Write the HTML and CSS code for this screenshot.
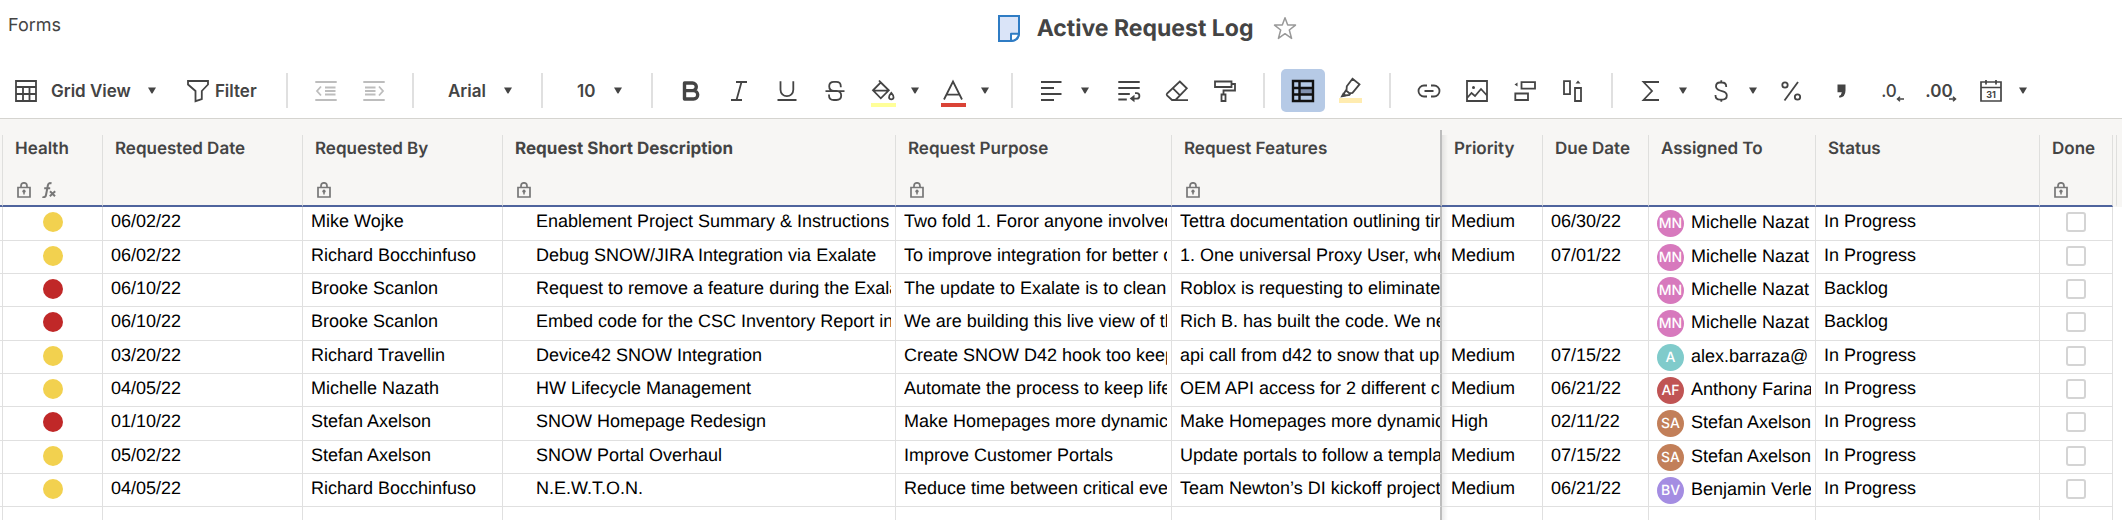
FILE: index.html
```html
<!DOCTYPE html>
<html lang="en">
<head>
<meta charset="utf-8">
<meta name="viewport" content="width=device-width, initial-scale=1">
<title>Active Request Log</title>
<link rel="stylesheet" href="styles.css">
</head>
<body>
<svg class="sprite" aria-hidden="true">
  <symbol id="caret" viewBox="0 0 8 7"><path d="M0 0.5h8L4.6 6.2q-.6.8-1.2 0z" fill="currentColor"/></symbol>
  <symbol id="lock" viewBox="0 0 14 16"><path d="M1 5.5h12v9.5H1zM4 5.500V4a3 3.200 0 0 1 6 0v1.500" fill="none" stroke="currentColor" stroke-width="1.700"/><circle cx="7" cy="9.200" r="1.600" fill="currentColor"/><path d="M7 9v3.500" stroke="currentColor" stroke-width="1.500"/></symbol>
  <symbol id="fx" viewBox="0 0 14 16"><path d="M9.500 1.500C7.600.5 6.300 1.300 5.900 3.300L4 13c-.4 2-1.600 2.600-3.500 1.800M2.200 6.300h6M8 9.300l5 5M13.200 9.300L7.800 14.300" fill="none" stroke="currentColor" stroke-width="2"/></symbol>
</svg>

<header class="topbar">
  <a class="forms-link" href="#forms">Forms</a>
  <div class="sheet-title">
    <svg class="sheet-icon" viewBox="0 0 22 27" aria-hidden="true"><path d="M1 1h20v17.500q-1 7.500-8 7.500H1z" fill="#dae4f8" stroke="#2f7cc4" stroke-width="2"/><path d="M13 26v-7.200h8q-1 6.500-8 7.200z" fill="#fff" stroke="#2f7cc4" stroke-width="2" stroke-linejoin="round"/></svg>
    <h1>Active Request Log</h1>
    <button class="star" type="button" aria-label="Favorite"><svg viewBox="0 0 24 24"><path d="M12 1.800l2.700 7.300h7.800l-6.200 4.900 2.300 8.400L12 17.700l-6.600 4.700L7.700 14 1.500 9.100h7.800z" fill="none" stroke="#999" stroke-width="1.500" stroke-linejoin="round"/></svg></button>
  </div>
</header>

<nav class="toolbar" aria-label="Sheet tools">
  <div class="group group-view">
    <button class="tool-text view" type="button" aria-haspopup="true">
      <svg class="ico" viewBox="0 0 24 24"><path d="M2 2h20v20H2zM2 8h20M2 15h20M9 8v14M15.500 8v14"/></svg>
      <span>Grid View</span>
      <svg class="caret"><use href="#caret"/></svg>
    </button>
    <button class="tool-text filter" type="button">
      <svg class="ico" viewBox="0 0 24 24"><path d="M2 2h20v3.500l-6.200 6.500v8l-6.300 2.200V12L2 5.500z"/></svg>
      <span>Filter</span>
    </button>
  </div>
  <span class="sep"></span>
  <div class="group">
    <button class="tool muted" type="button" aria-label="Outdent"><svg class="ico" viewBox="0 0 24 24"><path d="M1.300 3h21.400M1.300 21h21.400M11 8.500h10.500M11 12h10.500M11 15.500h10.500M7 7.500L3 12l4 4.500"/></svg></button>
    <button class="tool muted" type="button" aria-label="Indent"><svg class="ico" viewBox="0 0 24 24"><path d="M1.300 3h21.400M1.300 21h21.400M3 8.500h10.500M3 12h10.500M3 15.500h10.500M17 7.500l4 4.500-4 4.500"/></svg></button>
  </div>
  <span class="sep"></span>
  <label class="picker picker-font"><select aria-label="Font"><option>Arial</option></select><svg class="caret"><use href="#caret"/></svg></label>
  <span class="sep"></span>
  <label class="picker picker-size"><select aria-label="Font size"><option>10</option></select><svg class="caret"><use href="#caret"/></svg></label>
  <span class="sep"></span>
  <div class="group">
    <button class="tool" type="button" aria-label="Bold"><svg class="ico" viewBox="0 0 24 24"><path d="M5.500 4v16h9a4.200 4.200 0 0 0 0-8.400H6h7.500a3.800 3.800 0 0 0 0-7.600z" stroke-width="3.400" stroke-linejoin="round"/></svg></button>
    <button class="tool" type="button" aria-label="Italic"><svg class="ico" viewBox="0 0 24 24"><path d="M9 3h11M4 21h11M14.500 3L9.500 21"/></svg></button>
    <button class="tool" type="button" aria-label="Underline"><svg class="ico" viewBox="0 0 24 24"><path d="M5.500 2.300v8.500a6.400 6.400 0 0 0 12.800 0V2.300M2.500 21h19"/></svg></button>
    <button class="tool" type="button" aria-label="Strikethrough"><svg class="ico" viewBox="0 0 24 24"><path d="M17.800 8.200V7.400q0-4.600-4.600-4.600h-2.400Q6.200 2.800 6.200 7.300q0 4.500 4.800 4.500h2.200q5 0 5 4.700 0 4.500-4.800 4.500h-2.600q-4.800 0-4.800-4.800v-.6M2.500 12.200h19"/></svg></button>
    <div class="split">
      <button class="tool tool-color" type="button" aria-label="Fill color"><svg class="ico" viewBox="0 0 24 24"><path d="M9.800 3.500l8 7.800-8 8L2 11.300l7.800-7.800L8 1.500M2.500 11.600h15"/><path d="M20.300 13.800c-3.500 3.800-2.500 6.500 0 6.500s3.500-2.700 0-6.500z"/></svg><span class="swatch swatch-fill"></span></button>
      <button class="more" type="button" aria-label="Choose fill color"><svg class="caret"><use href="#caret"/></svg></button>
    </div>
    <div class="split">
      <button class="tool tool-color" type="button" aria-label="Text color"><svg class="ico" viewBox="0 0 24 24"><path d="M3 20.500L12 2.500l9 18M5.500 15.700h13"/></svg><span class="swatch swatch-text"></span></button>
      <button class="more" type="button" aria-label="Choose text color"><svg class="caret"><use href="#caret"/></svg></button>
    </div>
  </div>
  <span class="sep"></span>
  <div class="group">
    <div class="split split-wide">
      <button class="tool" type="button" aria-label="Align left"><svg class="ico" viewBox="0 0 24 24"><path d="M2 3h20.500M2 9h13M2 15h20.500M2 21h13"/></svg></button>
      <button class="more" type="button" aria-label="Choose alignment"><svg class="caret"><use href="#caret"/></svg></button>
    </div>
    <button class="tool" type="button" aria-label="Wrap text"><svg class="ico" viewBox="0 0 24 24"><path d="M1.300 3h21.400M1.300 9h21.400M1.300 15h11.500M1.300 20.500h8.500M18 14.200h1.700a2.700 2.700 0 0 1 0 5.400h-5"/><path class="solid" d="M17.500 15.800v7.400l-4.800-3.700z"/></svg></button>
    <button class="tool" type="button" aria-label="Clear format"><svg class="ico" viewBox="0 0 24 24"><path d="M14.800 2.500l7 6.800L10.500 21H7L2 16.300q-.6-.8 0-1.600zM8 9.300l7 7M9 21.200h14"/></svg></button>
    <button class="tool" type="button" aria-label="Format painter"><svg class="ico" viewBox="0 0 24 24"><path d="M2 2.500h16.500v5.500H2zM18.500 5h3.500v6.500H10.500v4M8.500 15.500h4v6.500h-4z"/></svg></button>
  </div>
  <span class="sep"></span>
  <div class="group">
    <button class="tool active" type="button" aria-pressed="true" aria-label="Highlight rows"><svg class="ico" viewBox="0 0 24 24"><path class="band" d="M8.500 9h13.500v6H8.500z"/><path d="M2 2h20v20H2zM2 9h20M2 15.500h20M8.500 2v20" stroke-width="2.400"/></svg></button>
    <button class="tool tool-mark" type="button" aria-label="Highlight changes"><svg class="ico" viewBox="0 0 24 24"><path d="M13.500 2.800l7 5.500-7 8.500-3.200.4-2.800-2.400.3-4.500zM7.500 13.500l-2.700 4.200 1.600 1.800 4-.5 1.300-2M4.800 17L3 20.300l4-.8"/></svg><span class="swatch swatch-mark"></span></button>
  </div>
  <span class="sep"></span>
  <div class="group">
    <button class="tool" type="button" aria-label="Insert link"><svg class="ico" viewBox="0 0 24 24"><path d="M10 6.500H7a5.500 5.500 0 0 0 0 11h3M14 6.500h3a5.500 5.500 0 0 1 0 11h-3M7.500 12h9"/></svg></button>
    <button class="tool" type="button" aria-label="Insert image"><svg class="ico" viewBox="0 0 24 24"><path d="M2 2h20v20H2zM2.500 18.500l4-4.500 3.500 3 6-7 6 6.500"/><circle class="solid" cx="8.500" cy="8.500" r="1.500"/></svg></button>
    <button class="tool" type="button" aria-label="Insert row"><svg class="ico" viewBox="0 0 24 24"><path d="M8.500 3.200H22v6.500H8.500zM2.300 14.500h12.700v6.500H2.300z"/><path class="solid" d="M1.500 5.500l3-2v4z"/></svg></button>
    <button class="tool" type="button" aria-label="Insert column"><svg class="ico" viewBox="0 0 24 24"><path d="M3 2.200h6v13H3zM14 9h6v13h-6z"/><path class="solid" d="M17 1.500l2.500 3h-5z"/></svg></button>
  </div>
  <span class="sep"></span>
  <div class="group group-format">
    <div class="split">
      <button class="tool" type="button" aria-label="Functions"><svg class="ico" viewBox="0 0 24 24"><path d="M20 3H4.500l8.500 9-8.500 9H20"/></svg></button>
      <button class="more" type="button" aria-label="Choose function"><svg class="caret"><use href="#caret"/></svg></button>
    </div>
    <div class="split">
      <button class="tool" type="button" aria-label="Currency"><svg class="ico" viewBox="0 0 24 24"><path d="M17.200 8V7.500q0-4-4.200-4h-2q-4 0-4 3.800 0 3 4 4.200l2.800.9q4 1.200 4 4.200 0 4-4.300 4h-2.700q-4.300 0-4.300-4v-.5M12.300 1.300v2.200M12.300 20.600v2.200"/></svg></button>
      <button class="more" type="button" aria-label="Choose currency"><svg class="caret"><use href="#caret"/></svg></button>
    </div>
    <button class="tool" type="button" aria-label="Percent"><svg class="ico" viewBox="0 0 24 24"><circle cx="6" cy="6" r="2.700"/><circle cx="18.500" cy="18" r="2.700"/><path d="M19 3L5.500 21.500"/></svg></button>
    <button class="tool" type="button" aria-label="Thousands separator"><svg class="ico" viewBox="0 0 24 24"><path class="solid" d="M8.500 5.500h8v6q0 6.500-6 7.300l-.5-1.800q2.500-.8 2.800-3.800H8.500z"/></svg></button>
    <button class="tool decimal decimal-less" type="button"><span>.0</span><svg viewBox="0 0 8 6"><path d="M8 3H1.500M4 .7L1.500 3 4 5.300"/></svg></button>
    <button class="tool decimal decimal-add" type="button"><span>.00</span><svg viewBox="0 0 8 6"><path d="M0 3h6.500M4 .7L6.500 3 4 5.300"/></svg></button>
    <div class="split">
      <button class="tool date" type="button" aria-label="Date format"><svg class="ico" viewBox="0 0 24 24"><path d="M2 3h20v19H2zM2 8.500h20M7 1v4.500M17 1v4.500" stroke-width="1.700"/></svg><span>31</span></button>
      <button class="more" type="button" aria-label="Choose date format"><svg class="caret"><use href="#caret"/></svg></button>
    </div>
  </div>
</nav>

<main class="sheet">
<table class="grid">
  <colgroup>
    <col class="w-gutter"><col class="w-health"><col class="w-date"><col class="w-by"><col class="w-desc"><col class="w-purpose"><col class="w-features"><col class="w-priority"><col class="w-due"><col class="w-assigned"><col class="w-status"><col class="w-done"><col class="w-edge"><col>
  </colgroup>
  <thead>
    <tr>
      <td></td>
      <th scope="col"><div class="head"><span>Health</span><span class="marks"><svg class="mark"><use href="#lock"/></svg><svg class="mark"><use href="#fx"/></svg></span></div></th>
      <th scope="col"><div class="head"><span>Requested Date</span></div></th>
      <th scope="col"><div class="head"><span>Requested By</span><span class="marks"><svg class="mark"><use href="#lock"/></svg></span></div></th>
      <th scope="col" class="primary"><div class="head"><span>Request Short Description</span><span class="marks"><svg class="mark"><use href="#lock"/></svg></span></div></th>
      <th scope="col"><div class="head"><span>Request Purpose</span><span class="marks"><svg class="mark"><use href="#lock"/></svg></span></div></th>
      <th scope="col" class="frozen-end"><div class="head"><span>Request Features</span><span class="marks"><svg class="mark"><use href="#lock"/></svg></span></div></th>
      <th scope="col" class="after-freeze"><div class="head"><span>Priority</span></div></th>
      <th scope="col"><div class="head"><span>Due Date</span></div></th>
      <th scope="col"><div class="head"><span>Assigned To</span></div></th>
      <th scope="col"><div class="head"><span>Status</span></div></th>
      <th scope="col"><div class="head"><span>Done</span><span class="marks"><svg class="mark"><use href="#lock"/></svg></span></div></th>
      <td class="edge"></td><td class="rest"></td>
    </tr>
  </thead>
  <tbody>
    <tr><td></td><td><span class="dot yellow"></span></td><td>06/02/22</td><td>Mike Wojke</td><td class="primary"><div>Enablement Project Summary &amp; Instructions</div></td><td><div>Two fold 1. Foror anyone involved</div></td><td class="frozen-end"><div>Tettra documentation outlining tim</div></td><td class="after-freeze">Medium</td><td>06/30/22</td><td><div class="person"><span class="avatar pink">MN</span>Michelle Nazat</div></td><td>In Progress</td><td><input type="checkbox" aria-label="Done"></td><td class="rest"></td><td class="rest"></td></tr>
    <tr><td></td><td><span class="dot yellow"></span></td><td>06/02/22</td><td>Richard Bocchinfuso</td><td class="primary"><div>Debug SNOW/JIRA Integration via Exalate</div></td><td><div>To improve integration for better c</div></td><td class="frozen-end"><div>1. One universal Proxy User, whe</div></td><td class="after-freeze">Medium</td><td>07/01/22</td><td><div class="person"><span class="avatar pink">MN</span>Michelle Nazat</div></td><td>In Progress</td><td><input type="checkbox" aria-label="Done"></td><td class="rest"></td><td class="rest"></td></tr>
    <tr><td></td><td><span class="dot red"></span></td><td>06/10/22</td><td>Brooke Scanlon</td><td class="primary"><div>Request to remove a feature during the Exala</div></td><td><div>The update to Exalate is to clean</div></td><td class="frozen-end"><div>Roblox is requesting to eliminate</div></td><td class="after-freeze"></td><td></td><td><div class="person"><span class="avatar pink">MN</span>Michelle Nazat</div></td><td>Backlog</td><td><input type="checkbox" aria-label="Done"></td><td class="rest"></td><td class="rest"></td></tr>
    <tr><td></td><td><span class="dot red"></span></td><td>06/10/22</td><td>Brooke Scanlon</td><td class="primary"><div>Embed code for the CSC Inventory Report in</div></td><td><div>We are building this live view of th</div></td><td class="frozen-end"><div>Rich B. has built the code. We ne</div></td><td class="after-freeze"></td><td></td><td><div class="person"><span class="avatar pink">MN</span>Michelle Nazat</div></td><td>Backlog</td><td><input type="checkbox" aria-label="Done"></td><td class="rest"></td><td class="rest"></td></tr>
    <tr><td></td><td><span class="dot yellow"></span></td><td>03/20/22</td><td>Richard Travellin</td><td class="primary"><div>Device42 SNOW Integration</div></td><td><div>Create SNOW D42 hook too keep</div></td><td class="frozen-end"><div>api call from d42 to snow that upd</div></td><td class="after-freeze">Medium</td><td>07/15/22</td><td><div class="person"><span class="avatar teal">A</span>alex.barraza@</div></td><td>In Progress</td><td><input type="checkbox" aria-label="Done"></td><td class="rest"></td><td class="rest"></td></tr>
    <tr><td></td><td><span class="dot yellow"></span></td><td>04/05/22</td><td>Michelle Nazath</td><td class="primary"><div>HW Lifecycle Management</div></td><td><div>Automate the process to keep life</div></td><td class="frozen-end"><div>OEM API access for 2 different co</div></td><td class="after-freeze">Medium</td><td>06/21/22</td><td><div class="person"><span class="avatar crimson">AF</span>Anthony Farina</div></td><td>In Progress</td><td><input type="checkbox" aria-label="Done"></td><td class="rest"></td><td class="rest"></td></tr>
    <tr><td></td><td><span class="dot red"></span></td><td>01/10/22</td><td>Stefan Axelson</td><td class="primary"><div>SNOW Homepage Redesign</div></td><td><div>Make Homepages more dynamic</div></td><td class="frozen-end"><div>Make Homepages more dynamic</div></td><td class="after-freeze">High</td><td>02/11/22</td><td><div class="person"><span class="avatar brown">SA</span>Stefan Axelson</div></td><td>In Progress</td><td><input type="checkbox" aria-label="Done"></td><td class="rest"></td><td class="rest"></td></tr>
    <tr><td></td><td><span class="dot yellow"></span></td><td>05/02/22</td><td>Stefan Axelson</td><td class="primary"><div>SNOW Portal Overhaul</div></td><td><div>Improve Customer Portals</div></td><td class="frozen-end"><div>Update portals to follow a templat</div></td><td class="after-freeze">Medium</td><td>07/15/22</td><td><div class="person"><span class="avatar brown">SA</span>Stefan Axelson</div></td><td>In Progress</td><td><input type="checkbox" aria-label="Done"></td><td class="rest"></td><td class="rest"></td></tr>
    <tr><td></td><td><span class="dot yellow"></span></td><td>04/05/22</td><td>Richard Bocchinfuso</td><td class="primary"><div>N.E.W.T.O.N.</div></td><td><div>Reduce time between critical eve</div></td><td class="frozen-end"><div>Team Newton’s DI kickoff project.</div></td><td class="after-freeze">Medium</td><td>06/21/22</td><td><div class="person"><span class="avatar violet">BV</span>Benjamin Verle</div></td><td>In Progress</td><td><input type="checkbox" aria-label="Done"></td><td class="rest"></td><td class="rest"></td></tr>
    <tr><td></td><td></td><td></td><td></td><td></td><td></td><td class="frozen-end"></td><td class="after-freeze"></td><td></td><td></td><td></td><td></td><td class="rest"></td><td class="rest"></td></tr>
  </tbody>
</table>
</main>
</body>
</html>
```
FILE: styles.css
```css
:root {
  --ink: #444;
  --line: #e0e0e0;
  --ui: Inter, Roboto, "Liberation Sans", sans-serif;
  --cell: "Liberation Sans", Arial, sans-serif;
}

* { box-sizing: border-box; }

body {
  margin: 0;
  height: 100vh;
  display: flex;
  flex-direction: column;
  overflow: hidden;
  background: #fff;
  color: var(--ink);
  font-family: var(--ui);
  font-size: 18px;
  text-rendering: geometricPrecision;
}

button, select {
  border: 0;
  padding: 0;
  background: none;
  color: inherit;
  font: inherit;
  cursor: pointer;
}

.sprite { display: none; }

/* Title bar */
.topbar {
  flex: none;
  display: flex;
  align-items: center;
  height: 56px;
  padding-left: 8px;
}

.forms-link {
  padding-bottom: 4px;
  color: inherit;
  line-height: 22px;
  text-decoration: none;
}

.sheet-title {
  flex: 1;
  display: flex;
  justify-content: center;
  align-items: center;
  padding-left: 112px;
}

.sheet-icon { width: 22px; height: 27px; }

h1 {
  margin: 0 20px 0 17px;
  font: 700 23px/28px var(--ui);
}

.star { display: flex; }
.star svg { width: 24px; height: 24px; }

/* Toolbar */
.toolbar {
  flex: none;
  display: flex;
  align-items: center;
  padding: 13px 0 6px;
  border-bottom: 1px solid #d5d4d0;
}

.group { flex: none; display: flex; gap: 4px; }
.group-view { gap: 30px; min-width: 270px; padding-left: 14px; }
.group-format { gap: 6px; }

.sep {
  flex: none;
  width: 2px;
  height: 35px;
  margin: 0 16px;
  background: var(--line);
}

.ico {
  display: block;
  width: 24px;
  height: 24px;
  fill: none;
  stroke: currentColor;
  stroke-width: 1.8;
}

.ico .solid { fill: currentColor; stroke: none; }
.ico .band { fill: #8292b0; stroke: none; }

.caret { display: block; width: 8px; height: 7px; }

.tool-text {
  display: flex;
  align-items: center;
  height: 43px;
  font-weight: 600;
  font-size: 17px;
}

.view { gap: 13px; }
.view .caret { margin-left: 4px; }
.filter { gap: 5px; }

.tool {
  position: relative;
  display: flex;
  justify-content: center;
  align-items: center;
  width: 44px;
  height: 43px;
  border-radius: 5px;
}

.muted { color: #bdbdbd; }
.active { background: #b6cae6; color: #111; }

.split { display: flex; margin-right: 2px; }
.split:last-child, .group-format .split { margin-right: 0; }
.split-wide { margin-right: 6px; }

.more {
  display: flex;
  justify-content: center;
  align-items: center;
  width: 20px;
}

.split-wide .more { width: 24px; }

.swatch {
  position: absolute;
  left: 10px;
  bottom: 5px;
  width: 25px;
  height: 4px;
}

.swatch-fill { background: #ffff99; }
.swatch-text { background: #da4336; }
.swatch-mark { bottom: 9px; height: 5px; width: 23px; background: #ffecb0; }
.tool-mark { padding-bottom: 6px; }

.picker {
  flex: none;
  position: relative;
  display: flex;
  align-items: center;
}

.picker select {
  width: 100%;
  height: 43px;
  padding-left: 18px;
  appearance: none;
  font-size: 17px;
  font-weight: 600;
}

.picker .caret {
  position: absolute;
  right: 13px;
  pointer-events: none;
}

.picker-font { width: 95px; }
.picker-size { width: 76px; }

.decimal { font-size: 17px; font-weight: 600; }
.decimal-less { padding-right: 4px; font-weight: 500; }

.decimal svg {
  position: absolute;
  right: 9px;
  bottom: 10px;
  width: 8px;
  height: 6px;
  fill: none;
  stroke: currentColor;
  stroke-width: 1.5;
}

.decimal-add { padding-right: 4px; }
.decimal-add svg { right: 6px; }

.date span {
  position: absolute;
  top: 20px;
  font-size: 9px;
  font-weight: 700;
  line-height: 12px;
}

/* Sheet */
.sheet {
  flex: 1;
  min-height: 0;
  overflow: hidden;
  padding-top: 16px;
  background: linear-gradient(#f7f6f4 80px, #fff 80px);
}

.grid {
  width: 100%;
  table-layout: fixed;
  border-spacing: 0;
  font-family: var(--cell);
}

.w-gutter { width: 3px; }
.w-health { width: 100px; }
.w-date, .w-by { width: 200px; }
.w-desc { width: 393px; }
.w-purpose { width: 276px; }
.w-features { width: 270px; }
.w-priority { width: 101px; }
.w-due { width: 106px; }
.w-assigned { width: 167px; }
.w-status { width: 224px; }
.w-done { width: 73px; }
.w-edge { width: 4px; }

th, thead td {
  position: relative;
  height: 72px;
  padding: 0;
  background: #f7f6f4;
  border-right: 1px solid #dfdfdd;
  border-bottom: 2px solid #4f649d;
  font-weight: 600;
  text-align: left;
}

thead .edge { border-bottom-color: #f7f6f4; }
thead .rest { border-color: #f7f6f4; }

.head {
  display: flex;
  flex-direction: column;
  justify-content: space-between;
  height: 70px;
  padding: 3px 0 7px 12px;
  font: 600 17px/22px var(--ui);
  white-space: nowrap;
}

.primary .head { font-weight: 700; }

.marks { display: flex; gap: 11px; padding-left: 2px; color: #777; }
.mark { width: 14px; height: 16px; }

th.frozen-end::after {
  content: "";
  position: absolute;
  top: -5px;
  right: -2px;
  width: 2px;
  height: 5px;
  background: #bdbdbd;
}

tbody td {
  height: 33px;
  padding: 4px 8px 0;
  border-right: 1px solid var(--line);
  border-bottom: 1px solid var(--line);
  color: #000;
  line-height: 20px;
  vertical-align: top;
  white-space: nowrap;
}

tbody tr:nth-child(3n + 1) td { height: 34px; }

tbody td:first-child { padding: 0; }
tbody td.rest { padding: 0; border: 0; }
tbody td:has(> div) { padding-right: 4px; }
tbody td > div { overflow: hidden; }
tbody td.primary { padding-left: 33px; }

.grid tbody .frozen-end { padding-right: 0; }
.grid .frozen-end { border-right: 2px solid #bdbdbd; }

.grid .after-freeze {
  background-image: linear-gradient(90deg, rgba(0, 0, 0, 0.08), rgba(0, 0, 0, 0));
  background-size: 6px 100%;
  background-repeat: no-repeat;
}

tbody td.after-freeze { padding-left: 9px; }

.dot {
  display: block;
  width: 20px;
  height: 20px;
  margin: 1px auto 0;
  border-radius: 50%;
}

.yellow { background: #f2d14f; }
.red { background: #c02828; }

.person { display: flex; height: 28px; margin-top: -1px; line-height: 24px; }

.avatar {
  flex: none;
  width: 27px;
  height: 27px;
  margin-right: 7px;
  border-radius: 50%;
  color: #fff;
  font: 500 14px/27px var(--ui);
  text-align: center;
}

.pink { background: #d779bd; }
.teal { background: #80cbcb; }
.crimson { background: #c05454; }
.brown { background: #c27f59; }
.violet { background: #a48de2; }

input[type="checkbox"] {
  display: block;
  width: 20px;
  height: 20px;
  margin: 1px auto 0;
  border: 2px solid #d4d4d4;
  border-radius: 3px;
  background: #fff;
  appearance: none;
}
```
